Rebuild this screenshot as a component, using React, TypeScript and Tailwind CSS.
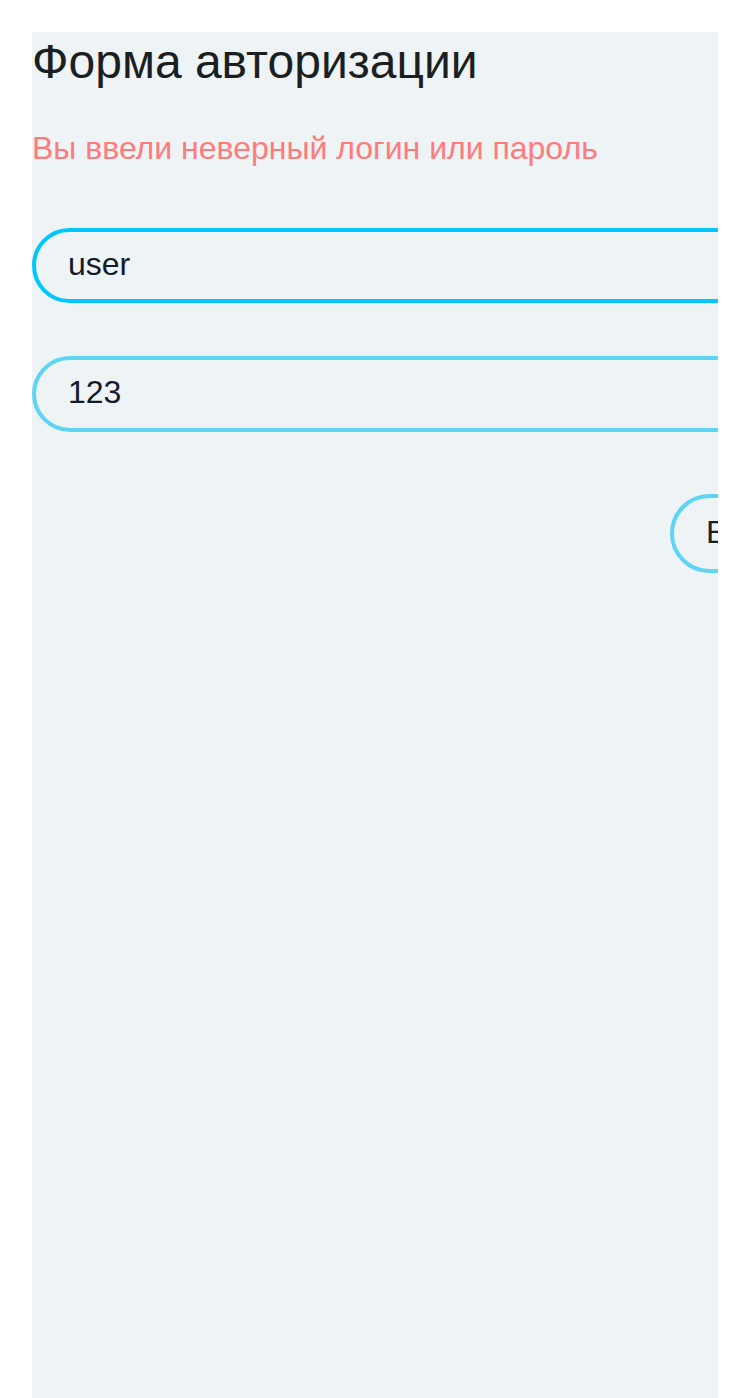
import React from "react";

export default function App() {
  return (
    <div className="w-[750px] h-[1398px] overflow-hidden bg-white pt-8 pl-8" style={{ fontFamily: '"Liberation Sans", Arial, sans-serif' }}>
      <div className="w-[686px] h-[1366px] bg-[#eef3f6] overflow-hidden">
        <div className="w-[900px]">
          <h1 className="pt-[1px] text-[48px] leading-[58px] text-[#1b1f22] font-normal">Форма авторизации</h1>
          <p className="mt-[37px] text-[32px] leading-[40px] text-[#ff7b7b]">Вы ввели неверный логин или пароль</p>
          <div className="mt-[60px] h-[75px] w-[860px] rounded-full border-4 border-[#00c8ff] flex items-center pl-[32px] pb-[4px] text-[32px] text-[#131a2b]">user</div>
          <div className="mt-[53px] h-[76px] w-[860px] rounded-full border-4 border-[#5dd5f3] flex items-center pl-[32px] pb-[4px] text-[32px] text-[#131a2b]">123</div>
          <div className="mt-[62px] ml-[638px] h-[79px] w-[200px] rounded-full border-4 border-[#5dd5f3] flex items-center pl-[32px] pb-[4px] text-[32px] text-[#1b1f22]">Войти</div>
        </div>
      </div>
    </div>
  );
}
